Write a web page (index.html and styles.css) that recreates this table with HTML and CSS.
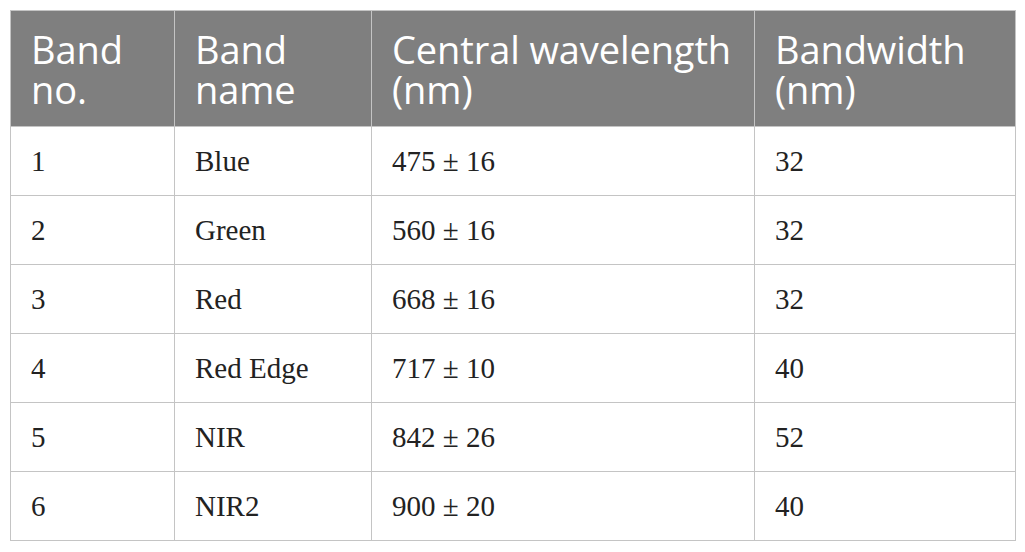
FILE: index.html
```html
<!DOCTYPE html>
<html>
<head>
<meta charset="utf-8">
<link rel="stylesheet" href="styles.css">
</head>
<body>
<table class="bands">
  <colgroup>
    <col class="c1"><col class="c2"><col class="c3"><col class="c4">
  </colgroup>
  <thead>
    <tr><th>Band<br>no.</th><th>Band<br>name</th><th>Central wavelength<br>(nm)</th><th>Bandwidth<br>(nm)</th></tr>
  </thead>
  <tbody>
    <tr><td>1</td><td>Blue</td><td>475 ± 16</td><td>32</td></tr>
    <tr><td>2</td><td>Green</td><td>560 ± 16</td><td>32</td></tr>
    <tr><td>3</td><td>Red</td><td>668 ± 16</td><td>32</td></tr>
    <tr><td>4</td><td>Red Edge</td><td>717 ± 10</td><td>40</td></tr>
    <tr><td>5</td><td>NIR</td><td>842 ± 26</td><td>52</td></tr>
    <tr><td>6</td><td>NIR2</td><td>900 ± 20</td><td>40</td></tr>
  </tbody>
</table>
</body>
</html>
```
FILE: styles.css
```css
html, body { margin: 0; padding: 0; background: #fff; }
body { padding: 10px 0 0 10px; }
.bands {
  border-collapse: collapse;
  width: 1005px;
  table-layout: fixed;
}
.c1 { width: 164px; }
.c2 { width: 197px; }
.c3 { width: 383px; }
.c4 { width: 261px; }
.bands th, .bands td {
  border: 1px solid #c4c4c4;
  text-align: left;
  padding: 0 0 0 20px;
}
.bands th {
  background: #7f7f7f;
  color: #fff;
  font-family: "Open Sans", sans-serif;
  font-weight: 400;
  font-size: 38px;
  line-height: 40px;
  height: 115px;
  vertical-align: middle;
  letter-spacing: -0.1px;
}
.bands td {
  font-family: "Liberation Serif", serif;
  font-size: 29px;
  color: #222;
  height: 68px;
  vertical-align: middle;
}
```
